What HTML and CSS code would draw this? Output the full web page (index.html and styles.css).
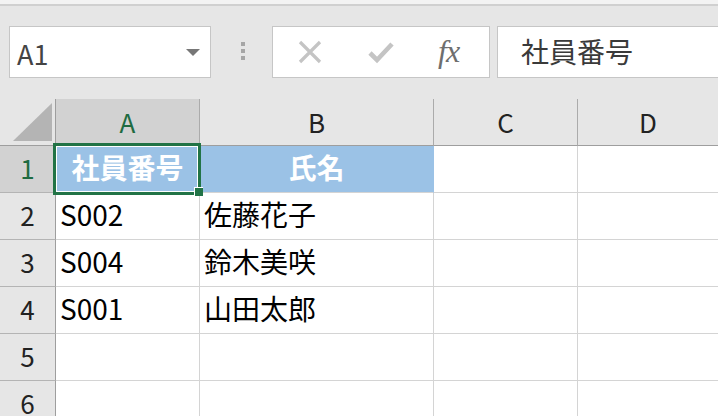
FILE: index.html
```html
<!DOCTYPE html>
<html lang="ja">
<head>
<meta charset="utf-8">
<link rel="stylesheet" href="styles.css">
</head>
<body>
<div class="topstrip"></div>
<div class="toolbar">
  <div class="namebox">
    <span class="ref">A1</span>
    <span class="caret"></span>
  </div>
  <div class="grip"><i></i><i></i><i></i></div>
  <div class="fbtns">
    <svg class="ico" width="24" height="24" viewBox="0 0 24 24"><path d="M2 2 L22 22 M22 2 L2 22" stroke="#c4c4c4" stroke-width="3.2" fill="none"/></svg>
    <svg class="ico" width="26" height="24" viewBox="0 0 26 24"><path d="M2 13 L9 20 L24 4" stroke="#c4c4c4" stroke-width="4.6" fill="none" stroke-linejoin="miter"/></svg>
    <span class="fx">fx</span>
  </div>
  <div class="finput">社員番号</div>
</div>
<div class="sheet">
  <div class="corner"><div class="tri"></div></div>
  <div class="ch sel">A</div>
  <div class="ch">B</div>
  <div class="ch">C</div>
  <div class="ch">D</div>

  <div class="rh sel">1</div>
  <div class="c head">社員番号</div>
  <div class="c head">氏名</div>
  <div class="c"></div>
  <div class="c"></div>

  <div class="rh">2</div>
  <div class="c">S002</div>
  <div class="c">佐藤花子</div>
  <div class="c"></div>
  <div class="c"></div>

  <div class="rh">3</div>
  <div class="c">S004</div>
  <div class="c">鈴木美咲</div>
  <div class="c"></div>
  <div class="c"></div>

  <div class="rh">4</div>
  <div class="c">S001</div>
  <div class="c">山田太郎</div>
  <div class="c"></div>
  <div class="c"></div>

  <div class="rh">5</div>
  <div class="c"></div>
  <div class="c"></div>
  <div class="c"></div>
  <div class="c"></div>

  <div class="rh">6</div>
  <div class="c"></div>
  <div class="c"></div>
  <div class="c"></div>
  <div class="c"></div>

  <div class="selection"></div>
  <div class="handle"></div>
</div>
</body>
</html>
```

FILE: styles.css
```css
html, body {
  margin: 0;
  padding: 0;
}
body {
  width: 718px;
  height: 416px;
  overflow: hidden;
  background: #e6e6e6;
  font-family: "Noto Sans CJK JP", "Noto Sans", sans-serif;
}
.topstrip {
  height: 4px;
  background: #f3f3f3;
  border-bottom: 2px solid #d0d0d0;
}
.toolbar {
  height: 93px;
  box-sizing: border-box;
  padding: 20px 0 0 9px;
  display: flex;
  align-items: flex-start;
}
.toolbar > * {
  flex-shrink: 0;
}
.namebox {
  width: 202px;
  height: 52px;
  box-sizing: border-box;
  background: #fff;
  border: 1px solid #c6c6c6;
  display: flex;
  align-items: center;
  justify-content: space-between;
  padding: 0 10px 0 7px;
}
.ref {
  font-size: 27px;
  color: #444;
  line-height: 1;
  padding-top: 2px;
}
.caret {
  width: 0;
  height: 0;
  border-left: 7px solid transparent;
  border-right: 7px solid transparent;
  border-top: 7px solid #777;
  margin-top: 1px;
}
.grip {
  margin-left: 30px;
  margin-top: 16px;
  display: flex;
  flex-direction: column;
  gap: 3px;
}
.grip i {
  display: block;
  width: 4px;
  height: 4px;
  background: #a6a6a6;
}
.fbtns {
  margin-left: 27px;
  width: 218px;
  height: 52px;
  box-sizing: border-box;
  background: #fff;
  border: 1px solid #c6c6c6;
  display: flex;
  align-items: center;
  padding-left: 25px;
}
.ico {
  display: block;
}
.ico + .ico {
  margin-left: 46px;
}
.fx {
  margin-left: 44px;
  font-family: "Liberation Serif", serif;
  font-style: italic;
  font-size: 32px;
  color: #6e6e6e;
  line-height: 1;
  margin-top: -3px;
  letter-spacing: -1px;
}
.finput {
  margin-left: 7px;
  flex: 1 1 auto;
  flex-shrink: 1;
  min-width: 0;
  height: 52px;
  box-sizing: border-box;
  background: #fff;
  border: 1px solid #c6c6c6;
  border-right: none;
  font-size: 28px;
  color: #3a3a3a;
  line-height: 48px;
  padding-left: 23px;
  white-space: nowrap;
}
.sheet {
  position: relative;
  display: grid;
  grid-template-columns: 56px 144px 234px 144px 1fr;
  grid-template-rows: 47px repeat(6, 47px);
  background: #fff;
}
.sheet > :nth-child(5n) {
  border-right: none;
}
.corner {
  background: #e6e6e6;
  border-right: 1px solid #9e9e9e;
  border-bottom: 1px solid #9e9e9e;
  padding: 4px 3px 4px 13px;
  display: flex;
  align-items: flex-end;
  justify-content: flex-end;
}
.tri {
  width: 39px;
  height: 38px;
  background: #b4b4b4;
  clip-path: polygon(100% 0, 100% 100%, 0 100%);
}
.ch {
  background: #e6e6e6;
  border-right: 1px solid #ababab;
  border-bottom: 1px solid #9e9e9e;
  display: flex;
  align-items: center;
  justify-content: center;
  font-size: 26px;
  color: #222;
  padding-bottom: 2px;
}
.rh {
  background: #e6e6e6;
  border-right: 1px solid #9e9e9e;
  border-bottom: 1px solid #b4b4b4;
  display: flex;
  align-items: center;
  justify-content: center;
  font-size: 26px;
  color: #222;
  padding-bottom: 3px;
}
.ch.sel, .rh.sel {
  background: #d2d2d2;
  color: #1f6b41;
}
.c {
  border-right: 1px solid #d4d4d4;
  border-bottom: 1px solid #d4d4d4;
  display: flex;
  align-items: center;
  padding-left: 4px;
  padding-bottom: 4px;
  font-size: 28px;
  color: #000;
  white-space: nowrap;
}
.c.head {
  background: #9bc2e6;
  color: #fff;
  font-weight: 700;
  justify-content: center;
  padding-left: 0;
  border-right-color: #9bc2e6;
}
.selection {
  position: absolute;
  left: 53px;
  top: 44px;
  width: 148px;
  height: 52px;
  box-sizing: border-box;
  border: 3px solid #217346;
  box-shadow: inset 0 0 0 1px #fff;
}
.handle {
  position: absolute;
  left: 194px;
  top: 88px;
  width: 9px;
  height: 9px;
  box-sizing: border-box;
  background: #217346;
  border-left: 1px solid #fff;
  border-top: 1px solid #fff;
}
```
